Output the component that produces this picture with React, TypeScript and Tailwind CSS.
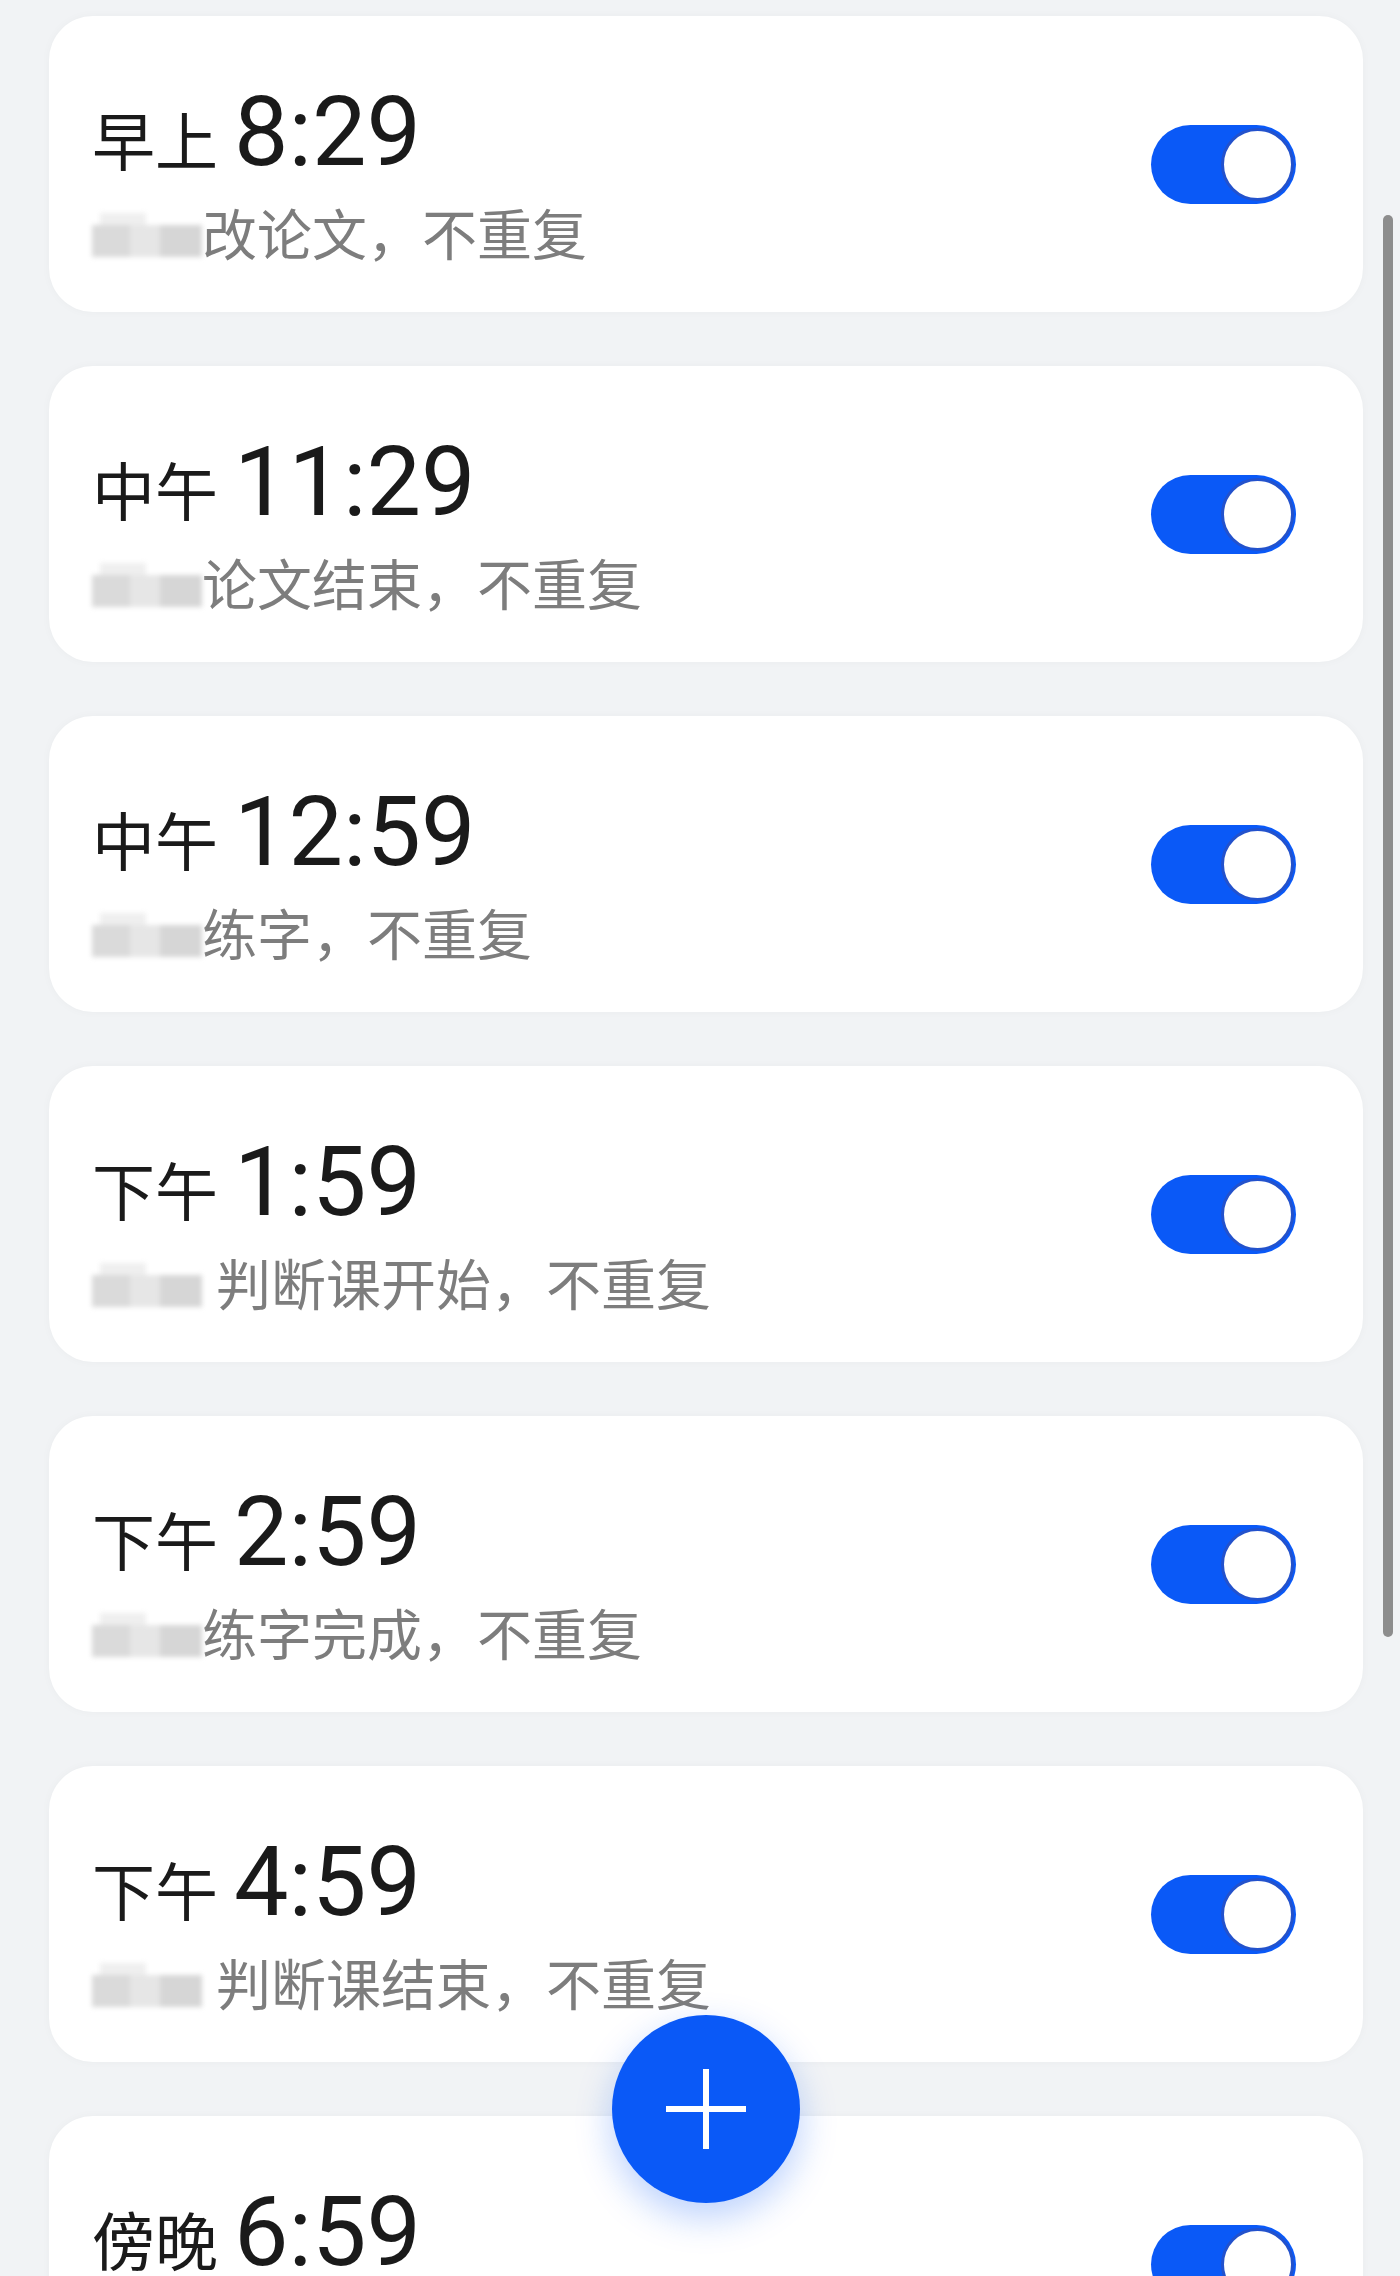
const alarms = [
  { period: "早上", time: "8:29", note: "改论文，不重复", gap: false },
  { period: "中午", time: "11:29", note: "论文结束，不重复", gap: false },
  { period: "中午", time: "12:59", note: "练字，不重复", gap: false },
  { period: "下午", time: "1:59", note: "判断课开始，不重复", gap: true },
  { period: "下午", time: "2:59", note: "练字完成，不重复", gap: false },
  { period: "下午", time: "4:59", note: "判断课结束，不重复", gap: true },
  { period: "傍晚", time: "6:59", note: "不重复", gap: false },
];

// blurred-out name in front of the note
const Blur = () => (
  <span className="mt-[4px] flex h-[44px] w-[110px] shrink-0 flex-col blur-[2.5px]">
    <span className="ml-[8px] h-[12px] w-[46px] bg-[#efefef]" />
    <span className="flex h-[32px]">
      <span className="w-[38px] bg-[#dadada]" />
      <span className="w-[30px] bg-[#e6e6e6]" />
      <span className="w-[42px] bg-[#d6d6d6]" />
    </span>
  </span>
);

const Toggle = () => (
  <div className="relative h-[79px] w-[145px] shrink-0 rounded-full bg-[#0a59f7]">
    <div className="absolute right-[2px] top-[3px] h-[73px] w-[73px] rounded-full border-[3px] border-[#2352cc] bg-white" />
  </div>
);

const AlarmCard = ({ alarm }: { alarm: (typeof alarms)[number] }) => (
  <div className="flex h-[296px] w-[1314px] shrink-0 items-center justify-between rounded-[44px] bg-white pl-[43px] pr-[67px] shadow-[0_0_10px_rgba(0,0,0,0.03)]">
    <div className="mt-[19px] flex flex-col">
      <div className="flex items-baseline leading-none text-[#1a1a1a]">
        <span className="text-[63px]">{alarm.period}</span>
        <span className="ml-[16px] text-[97px]">{alarm.time}</span>
      </div>
      <div className="mt-[28px] flex items-start text-[55px] leading-none text-[#7d7d7d]">
        <Blur />
        <span className={alarm.gap ? "ml-[14px]" : ""}>{alarm.note}</span>
      </div>
    </div>
    <Toggle />
  </div>
);

export default function App() {
  return (
    <div className="relative h-[2276px] w-[1400px] overflow-hidden bg-[#f1f3f5] font-[Roboto,'Noto_Sans_CJK_SC',sans-serif]">
      <div className="flex flex-col gap-[54px] pl-[49px] pt-[16px]">
        {alarms.map((alarm, index) => (
          <AlarmCard key={index} alarm={alarm} />
        ))}
      </div>

      {/* scrollbar */}
      <div className="absolute left-[1383px] top-[215px] h-[1422px] w-[10px] rounded-full bg-[#8d8d8d]" />

      {/* add button */}
      <button className="absolute left-[612px] top-[2015px] flex h-[188px] w-[188px] items-center justify-center rounded-full bg-[#0a59f7] shadow-[0_14px_36px_rgba(10,89,247,0.28)]">
        <svg width="80" height="80" viewBox="0 0 80 80">
          <path d="M0 40H80M40 0V80" stroke="white" strokeWidth="6" />
        </svg>
      </button>
    </div>
  );
}
